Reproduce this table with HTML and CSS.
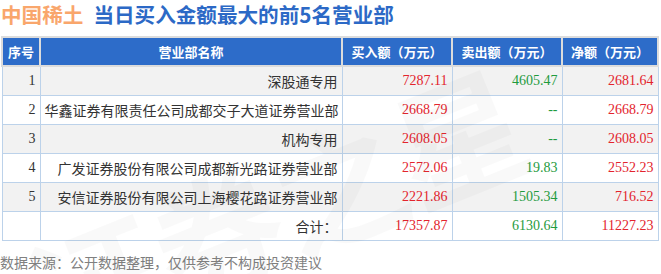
FILE: index.html
```html
<!DOCTYPE html>
<html lang="zh-CN">
<head>
    <meta charset="UTF-8">
    <title>中国稀土 当日买入金额最大的前5名营业部</title>
    <link rel="stylesheet" href="styles.css">
</head>
<body>
    <div class="page">
        <h1 class="title"><span class="stock">中国稀土</span><span class="desc">当日买入金额最大的前5名营业部</span></h1>
        <table class="rank">
            <thead>
                <tr>
                    <th class="c-no">序号</th>
                    <th class="c-name">营业部名称</th>
                    <th class="c-buy">买入额（万元）</th>
                    <th class="c-sell">卖出额（万元）</th>
                    <th class="c-net">净额（万元）</th>
                </tr>
            </thead>
            <tbody>
                <tr>
                    <td class="num">1</td>
                    <td class="name">深股通专用</td>
                    <td class="num up">7287.11</td>
                    <td class="num down">4605.47</td>
                    <td class="num up">2681.64</td>
                </tr>
                <tr>
                    <td class="num">2</td>
                    <td class="name">华鑫证券有限责任公司成都交子大道证券营业部</td>
                    <td class="num up">2668.79</td>
                    <td class="num down">--</td>
                    <td class="num up">2668.79</td>
                </tr>
                <tr>
                    <td class="num">3</td>
                    <td class="name">机构专用</td>
                    <td class="num up">2608.05</td>
                    <td class="num down">--</td>
                    <td class="num up">2608.05</td>
                </tr>
                <tr>
                    <td class="num">4</td>
                    <td class="name">广发证券股份有限公司成都新光路证券营业部</td>
                    <td class="num up">2572.06</td>
                    <td class="num down">19.83</td>
                    <td class="num up">2552.23</td>
                </tr>
                <tr>
                    <td class="num">5</td>
                    <td class="name">安信证券股份有限公司上海樱花路证券营业部</td>
                    <td class="num up">2221.86</td>
                    <td class="num down">1505.34</td>
                    <td class="num up">716.52</td>
                </tr>
                <tr class="total">
                    <td></td>
                    <td class="name">合计：</td>
                    <td class="num up">17357.87</td>
                    <td class="num down">6130.64</td>
                    <td class="num up">11227.23</td>
                </tr>
            </tbody>
        </table>
        <p class="source">数据来源：公开数据整理，仅供参考不构成投资建议</p>
        <div class="watermark">证券之星</div>
    </div>
</body>
</html>
```

FILE: styles.css
```css
body {
    margin: 0;
    background: #fff;
    font-family: "Noto Sans CJK SC", "Noto Sans", sans-serif;
    color: #333;
}
.page {
    position: relative;
    width: 661px;
    height: 274px;
    overflow: hidden;
}
.title {
    margin: 0 0 7px;
    padding: 0 0 0 1px;
    line-height: 29px;
    font-size: 20.6px;
    font-weight: bold;
    white-space: nowrap;
}
.stock {
    color: #f9a66c;
    margin-right: 10px;
}
.desc {
    color: #2c69c6;
}
.rank {
    border-collapse: collapse;
    margin-left: 1px;
    width: 658px;
    table-layout: fixed;
}
.rank th {
    background: #2d6cc9;
    color: #fff;
    font-size: 13px;
    font-weight: bold;
    height: 27px;
    padding: 0;
    border: 2px solid #dcdcdc;
    text-align: center;
    white-space: nowrap;
}
.c-no { width: 36px; }
.c-name { width: 300px; }
.c-buy { width: 108px; }
.c-sell { width: 108px; }
.rank td {
    height: 28px;
    padding: 0 4px;
    border: 1px solid #bcd2ea;
    white-space: nowrap;
}
.rank tbody tr:nth-child(odd) td {
    background: #f2f2f2;
}
.rank tbody tr.total td {
    background: #fff;
}
.name {
    font-size: 14px;
    text-align: right;
    color: #333;
}
.num {
    font-family: "Liberation Serif", serif;
    font-size: 14px;
    text-align: right;
    color: #333;
}
.up { color: #e3242d; }
.down { color: #1f9b3e; }
.source {
    margin: 11px 0 0;
    font-size: 14px;
    color: #808080;
    line-height: 20px;
    white-space: nowrap;
}
.watermark {
    position: absolute;
    left: 0;
    top: 215px;
    font-size: 130px;
    font-weight: bold;
    color: rgba(0, 0, 0, 0.022);
    transform: rotate(-22deg);
    transform-origin: left top;
    pointer-events: none;
    white-space: nowrap;
}
```
